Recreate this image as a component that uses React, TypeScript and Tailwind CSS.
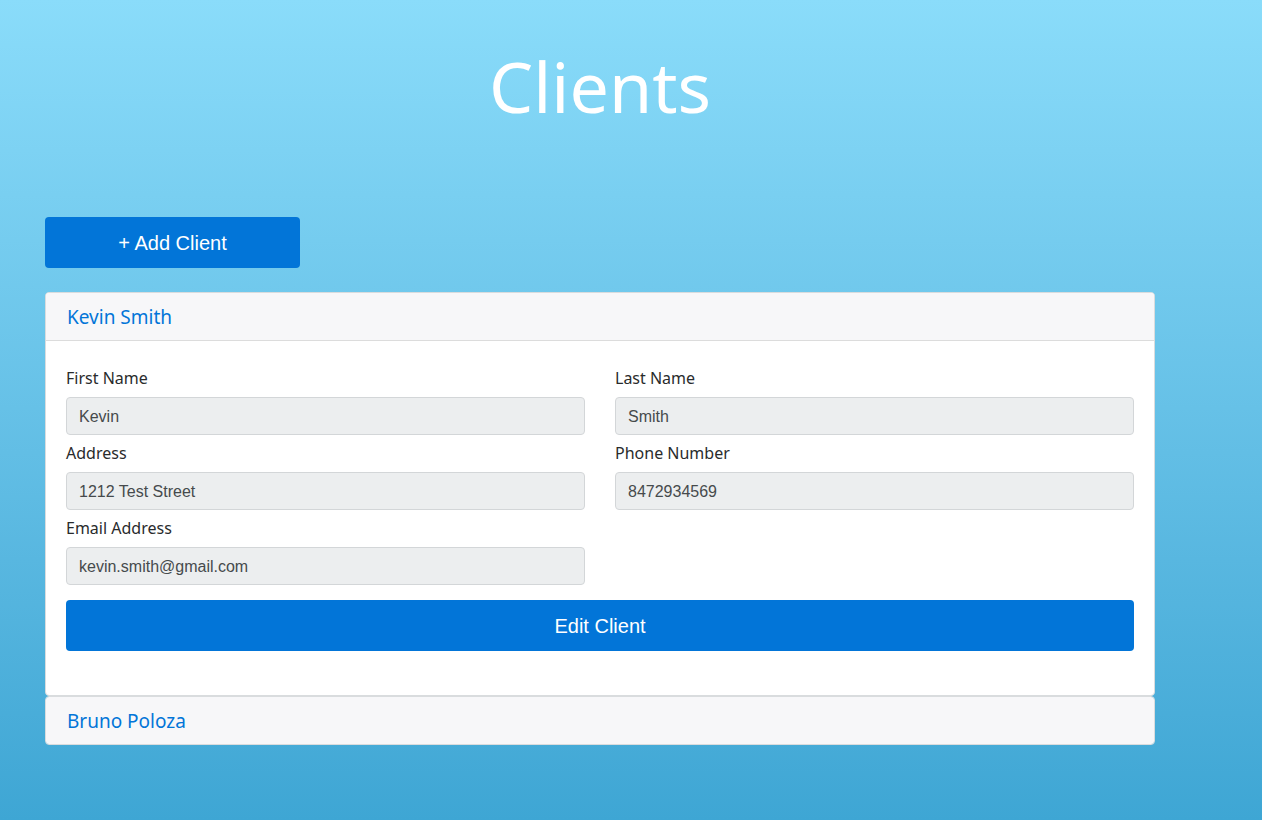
import React from "react";

const comic = "font-['Comic_Sans_MS','Noto_Sans',sans-serif]";
const arial = "font-['Liberation_Sans',Arial,sans-serif]";

type Field = { label: string; value: string };

const FieldGroup = ({ label, value }: Field) => (
  <div className="mb-[6px]">
    <label className={`${comic} block h-6 mb-[7px] text-[16px] leading-6 text-[#292b2c]`}>
      {label}
    </label>
    <input
      readOnly
      value={value}
      className={`${arial} block w-full h-[38px] px-3 pt-[1px] text-[16px] text-[#464a4c] bg-[#eceeef] border border-[#d3d6d8] rounded-[4px] outline-none`}
    />
  </div>
);

const ClientHeader = ({ name, last }: { name: string; last?: boolean }) => (
  <div
    className={`flex items-center px-[21px] bg-[#f7f7f9] ${
      last ? "h-[47px]" : "h-[48px] border-b border-[#dcdcdc]"
    }`}
  >
    <span className={`${comic} text-[19px] pt-[2px] text-[#0275d8]`}>{name}</span>
  </div>
);

export default function App() {
  return (
    <div className="min-h-[820px] w-full bg-linear-to-b from-[#8adcfa] to-[#3ea6d4]">
      <div className="w-[1110px] ml-[45px]">
        <div className="h-[172px] flex items-center justify-center">
          <h1 className={`${comic} text-[70px] leading-none text-white`}>Clients</h1>
        </div>

        <div className="mt-[45px]">
          <button
            className={`${arial} w-[255px] h-[51px] rounded-[4px] bg-[#0275d8] text-white text-[20px]`}
          >
            + Add Client
          </button>
        </div>

        <div className="mt-[24px] bg-white border border-[#d9dcde] rounded-[4px] overflow-hidden">
          <ClientHeader name="Kevin Smith" />
          <div className="px-[20px] pt-[25px] pb-[44px]">
            <div className="grid grid-cols-2 gap-x-[30px]">
              <FieldGroup label="First Name" value="Kevin" />
              <FieldGroup label="Last Name" value="Smith" />
              <FieldGroup label="Address" value="1212 Test Street" />
              <FieldGroup label="Phone Number" value="8472934569" />
              <FieldGroup label="Email Address" value="kevin.smith@gmail.com" />
            </div>
            <button
              className={`${arial} mt-[9px] w-full h-[51px] rounded-[4px] bg-[#0275d8] text-white text-[20px]`}
            >
              Edit Client
            </button>
          </div>
        </div>

        <div className="bg-white border border-[#d9dcde] rounded-[4px] overflow-hidden">
          <ClientHeader name="Bruno Poloza" last />
        </div>
      </div>
    </div>
  );
}
